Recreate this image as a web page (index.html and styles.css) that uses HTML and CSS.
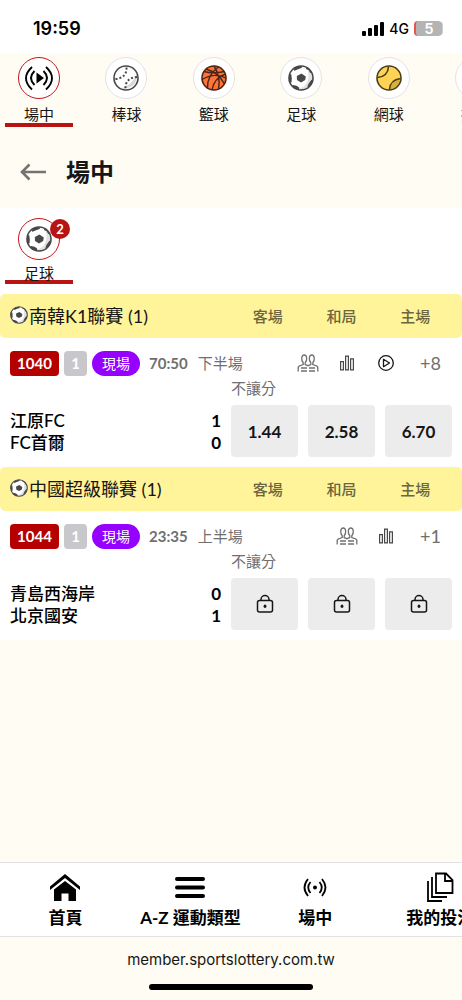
FILE: index.html
```html
<!DOCTYPE html>
<html lang="zh-Hant">

<head>
    <meta charset="UTF-8">
    <meta name="viewport" content="width=device-width, initial-scale=1.0">
    <title>場中</title>
    <link rel="stylesheet" href="styles.css">
</head>

<body>
    <!-- Shared icons -->
    <svg class="sprite" aria-hidden="true">
        <symbol id="icon-soccer" viewBox="0 0 26 26">
            <circle cx="13" cy="13" r="12" fill="#fff"/>
            <path d="M22 5.500A11.500 11.500 0 0 1 9 24C17 23 22 17 20 6z" fill="#e2e2e2"/>
            <path d="M13.500 8.500l4.300 3-.6 3.600-4.200 2.400-4-2.400-.2-4.200z" fill="#484848"/>
            <path d="M7.500 2l6-1 .5 1.800-4.600 1.600-2.800 1.300-1.200-1zM18.300 2l4.200 3.500 1.300 3-1.600-.8-1.600-2.500-2.600-1.200zM1 9.500l2.200-.5.6 4.300-.2 4-1.600.4L1 14zM5 20l3.500.8 2.700 1.800-.3 2.200-4.400-1.200-2.600-2.400zM24.900 14l-1.200 5-3.300 3.200-1-.6 1.300-3.200 2.400-3.200z" fill="#484848"/>
            <circle cx="13" cy="13" r="12" fill="none" stroke="#484848" stroke-width="1.600"/>
        </symbol>
        <symbol id="icon-people" viewBox="0 0 22 20">
            <g fill="none" stroke="#707070" stroke-width="1.300">
                <path d="M1.200 18.500v-4.200l1-1.300 4-1.500V9.800C4 7.500 4.200 2 7.200 2s3.200 5.500 1 7.800v1.700l2.800 1.200 2.800-1.200V9.800c-2.200-2.300-2-7.800 1-7.800s3.200 5.500 1 7.800v1.700l4 1.500 1 1.300v4.200"/>
                <path d="M4 15h6M4 18h6M12 15h6M12 18h6"/>
            </g>
        </symbol>
        <symbol id="icon-stats" viewBox="0 0 16 16">
            <path d="M1.600 6.600h2.800v8.300H1.600zM6.600 1.100h2.800v13.800H6.600zM11.600 3.900h2.800v11h-2.800z" fill="none" stroke="#484848" stroke-width="1.200"/>
        </symbol>
        <symbol id="icon-play" viewBox="0 0 18 18">
            <circle cx="9" cy="9" r="7.300" fill="none" stroke="#161616" stroke-width="1.300"/>
            <path d="M6.500 5.300v7.400L12.500 9z" fill="none" stroke="#161616" stroke-width="1.300" stroke-linejoin="round"/>
        </symbol>
        <symbol id="icon-lock" viewBox="0 0 18 20">
            <rect x="1.500" y="6.500" width="15" height="11.500" rx="2" fill="none" stroke="#161616" stroke-width="1.500"/>
            <path d="M5 6.500V5.500a4 4 0 0 1 8 0v1" fill="none" stroke="#161616" stroke-width="1.500"/>
            <ellipse cx="9" cy="12.200" rx="1.400" ry="1.800" fill="#161616"/>
        </symbol>
    </svg>

    <header class="status-bar">
        <span class="clock">19:59</span>
        <div class="status-icons">
            <svg width="22" height="14" viewBox="0 0 22 14" aria-hidden="true">
                <rect x="0" y="9" width="4" height="5" rx="1"/>
                <rect x="6" y="6" width="4" height="8" rx="1"/>
                <rect x="12" y="3" width="4" height="11" rx="1"/>
                <rect x="18" y="0" width="4" height="14" rx="1"/>
            </svg>
            <span class="network">4G</span>
            <span class="battery">5</span>
        </div>
    </header>

    <nav class="sports">
        <a href="#live" class="sport active">
            <span class="circle">
                <svg width="32" height="32" viewBox="0 0 32 32" aria-hidden="true">
                    <path d="M13.500 10.500v11l7.500-5.500z"/>
                    <path d="M11.500 9Q4.500 16 11.500 23M20.500 9Q27.500 16 20.500 23M9 5Q-3 16 9 27.500M23 5Q35 16 23 27.500" fill="none" stroke="#000" stroke-width="1.900"/>
                </svg>
            </span>
            場中
        </a>
        <a href="#baseball" class="sport">
            <span class="circle">
                <svg width="26" height="26" viewBox="0 0 26 26" aria-hidden="true">
                    <circle cx="13" cy="13" r="12" fill="#fff"/>
                    <path d="M24 8Q25 24 8 23.500 20 20 24 8z" fill="#d8d8d8"/>
                    <path d="M13.500 2.500Q14 13 2 14M24 12Q12 13 12.500 24" fill="none" stroke="#484848" stroke-width="2" stroke-dasharray="2 2"/>
                    <circle cx="13" cy="13" r="12" fill="none" stroke="#484848" stroke-width="1.600"/>
                </svg>
            </span>
            棒球
        </a>
        <a href="#basketball" class="sport">
            <span class="circle">
                <svg width="26" height="26" viewBox="0 0 26 26" aria-hidden="true">
                    <circle cx="13" cy="13" r="12" fill="#ff7438"/>
                    <path d="M3 6.500Q12 9 23.500 6.500M1 14.500Q14 7 25 13M13 1Q20 12 17.500 24M18 1.500Q6 10 6.500 23M24.500 9Q13 13 11 25M5 4Q18 8 23.500 19" fill="none" stroke="#4b2618" stroke-width="1.400"/>
                    <circle cx="13" cy="13" r="12" fill="none" stroke="#4b2618" stroke-width="1.600"/>
                </svg>
            </span>
            籃球
        </a>
        <a href="#soccer" class="sport">
            <span class="circle"><svg width="26" height="26" aria-hidden="true"><use href="#icon-soccer"/></svg></span>
            足球
        </a>
        <a href="#tennis" class="sport">
            <span class="circle">
                <svg width="26" height="26" viewBox="0 0 26 26" aria-hidden="true">
                    <circle cx="13" cy="13" r="12" fill="#ffd454"/>
                    <path d="M23.500 14Q15 16 14 24.500 23 23 23.500 14z" fill="#d9b03c"/>
                    <path d="M12.500 1.500Q12 11.500 1.500 12.500M24.500 13.500Q14 15 13.500 24.500" fill="none" stroke="#4a3f1a" stroke-width="1.600"/>
                    <circle cx="13" cy="13" r="12" fill="none" stroke="#4a3f1a" stroke-width="1.600"/>
                </svg>
            </span>
            網球
        </a>
        <a href="#volleyball" class="sport">
            <span class="circle"></span>
            排球
        </a>
    </nav>

    <div class="page-title">
        <button class="back" aria-label="返回">
            <svg width="26" height="18" viewBox="0 0 26 18" aria-hidden="true">
                <path d="M26 9H2M9.500 1.500L2 9l7.500 7.500" fill="none" stroke="#737370" stroke-width="2.600"/>
            </svg>
        </button>
        <h1>場中</h1>
    </div>

    <main>
        <nav class="sports live-sports">
            <a href="#live-soccer" class="sport active">
                <span class="circle">
                    <svg width="26" height="26" aria-hidden="true"><use href="#icon-soccer"/></svg>
                    <span class="count">2</span>
                </span>
                足球
            </a>
        </nav>

        <section class="league">
            <div class="league-header">
                <h2><svg width="18" height="18" aria-hidden="true"><use href="#icon-soccer"/></svg>南韓K1聯賽 (1)</h2>
                <div class="outcomes"><span>客場</span><span>和局</span><span>主場</span></div>
            </div>
            <div class="match">
                <div class="match-info">
                    <span class="code">1040</span>
                    <span class="single">1</span>
                    <span class="live">現場</span>
                    <span class="time">70:50</span>
                    <span class="period">下半場</span>
                    <div class="links">
                        <button aria-label="對戰"><svg width="22" height="20"><use href="#icon-people"/></svg></button>
                        <button aria-label="統計"><svg width="16" height="16"><use href="#icon-stats"/></svg></button>
                        <button aria-label="直播"><svg width="18" height="18"><use href="#icon-play"/></svg></button>
                        <a href="#match-1040" class="more">+8</a>
                    </div>
                </div>
                <div class="match-body">
                    <div class="teams">
                        <div class="team"><span>江原FC</span><b>1</b></div>
                        <div class="team"><span>FC首爾</span><b>0</b></div>
                    </div>
                    <div class="market">
                        <div class="market-name">不讓分</div>
                        <div class="odds">
                            <button>1.44</button>
                            <button>2.58</button>
                            <button>6.70</button>
                        </div>
                    </div>
                </div>
            </div>
        </section>

        <section class="league">
            <div class="league-header">
                <h2><svg width="18" height="18" aria-hidden="true"><use href="#icon-soccer"/></svg>中國超級聯賽 (1)</h2>
                <div class="outcomes"><span>客場</span><span>和局</span><span>主場</span></div>
            </div>
            <div class="match">
                <div class="match-info">
                    <span class="code">1044</span>
                    <span class="single">1</span>
                    <span class="live">現場</span>
                    <span class="time">23:35</span>
                    <span class="period">上半場</span>
                    <div class="links">
                        <button aria-label="對戰"><svg width="22" height="20"><use href="#icon-people"/></svg></button>
                        <button aria-label="統計"><svg width="16" height="16"><use href="#icon-stats"/></svg></button>
                        <a href="#match-1044" class="more">+1</a>
                    </div>
                </div>
                <div class="match-body">
                    <div class="teams">
                        <div class="team"><span>青島西海岸</span><b>0</b></div>
                        <div class="team"><span>北京國安</span><b>1</b></div>
                    </div>
                    <div class="market">
                        <div class="market-name">不讓分</div>
                        <div class="odds">
                            <button aria-label="客場"><svg width="18" height="20"><use href="#icon-lock"/></svg></button>
                            <button aria-label="和局"><svg width="18" height="20"><use href="#icon-lock"/></svg></button>
                            <button aria-label="主場"><svg width="18" height="20"><use href="#icon-lock"/></svg></button>
                        </div>
                    </div>
                </div>
            </div>
        </section>
    </main>

    <nav class="bottom-nav">
        <a href="#home">
            <svg width="30" height="30" viewBox="0 0 30 30" aria-hidden="true">
                <path d="M0 14.500L15 2l15 12.500v3.500L15 6 0 18z"/>
                <path d="M4 17.500L15 9l11 8.500V29h-7.500v-7.500h-7V29H4z"/>
            </svg>
            首頁
        </a>
        <a href="#sports">
            <svg width="30" height="30" viewBox="0 0 30 30" aria-hidden="true">
                <path d="M2 7h26M2 15.500h26M2 24h26" stroke="#000" stroke-width="4" stroke-linecap="round"/>
            </svg>
            A-Z 運動類型
        </a>
        <a href="#live">
            <svg width="30" height="30" viewBox="0 0 30 30" aria-hidden="true">
                <circle cx="15" cy="15.500" r="2"/>
                <path d="M10.500 10Q6 15.500 10.500 21M19.500 10Q24 15.500 19.500 21M8 7Q1 15.500 8 24M22 7Q29 15.500 22 24" fill="none" stroke="#000" stroke-width="1.800"/>
            </svg>
            場中
        </a>
        <a href="#bets">
            <svg width="30" height="30" viewBox="0 0 30 30" aria-hidden="true">
                <path d="M11 1.500h10l6.500 6.500v13H11zM20 1.500V9h7.500M7 5v20h15M3 9v20h14" fill="none" stroke="#000" stroke-width="1.800"/>
            </svg>
            我的投注
        </a>
    </nav>

    <footer class="browser-bar">
        <span>member.sportslottery.com.tw</span>
        <div class="home-indicator"></div>
    </footer>
</body>

</html>
```
FILE: styles.css
```css
/* Base Styles */
* {
    box-sizing: border-box;
}

body {
    margin: 0;
    min-height: 100vh;
    display: flex;
    flex-direction: column;
    overflow-x: hidden;
    background-color: #fffcf3;
    color: #161616;
    font-family: Lato, "Noto Sans CJK TC", sans-serif;
}

a {
    color: inherit;
    text-decoration: none;
}

button {
    padding: 0;
    border: none;
    background: none;
    color: inherit;
    font-family: inherit;
    cursor: pointer;
}

h1,
h2 {
    margin: 0;
}

svg {
    display: block;
    flex-shrink: 0;
}

.sprite {
    position: absolute;
    width: 0;
    height: 0;
}

/* Status bar */
.status-bar {
    height: 54px;
    padding: 3px 18px 0 33px;
    display: flex;
    align-items: center;
    justify-content: space-between;
    background-color: #fff;
    color: #000;
    font-family: Inter, sans-serif;
}

.clock {
    font-size: 18px;
    font-weight: 600;
}

.status-icons {
    display: flex;
    align-items: center;
    gap: 5px;
}

.network {
    font-size: 14px;
    font-weight: 500;
}

.battery {
    width: 28px;
    height: 15px;
    margin-right: 2px;
    border-left: 2px solid #f0504c;
    border-radius: 4px;
    background-color: #b4b4b4;
    box-shadow: 2px 0 0 -1px #cfcfcf;
    color: #fff;
    font-size: 14px;
    font-weight: 700;
    line-height: 15px;
    text-align: center;
}

/* Sports */
.sports {
    padding: 3px 5px 0;
    display: flex;
    gap: 4.3%;
    overflow-x: auto;
    scrollbar-width: none;
}

.sport {
    flex: 0 0 68px;
    height: 70px;
    display: flex;
    flex-direction: column;
    align-items: center;
    gap: 4px;
    border-bottom: 4px solid transparent;
    font-size: 15px;
    line-height: 22px;
    white-space: nowrap;
}

.sport.active {
    border-bottom-color: #b81414;
}

.circle {
    position: relative;
    width: 42px;
    height: 42px;
    flex-shrink: 0;
    display: flex;
    align-items: center;
    justify-content: center;
    border: 1px solid #e3e3e3;
    border-radius: 50%;
    background-color: #fff;
}

.active .circle {
    border-color: #c4161c;
}

.count {
    position: absolute;
    top: 0;
    right: -11px;
    width: 20px;
    height: 20px;
    border-radius: 50%;
    background-color: #b81414;
    color: #fff;
    font-size: 13px;
    font-weight: 700;
    line-height: 20px;
    text-align: center;
}

/* Page title */
.page-title {
    height: 81px;
    padding: 8px 20px 0;
    display: flex;
    align-items: center;
    gap: 20px;
}

.page-title h1 {
    font-size: 24px;
    font-weight: 700;
    line-height: 36px;
}

main {
    background-color: #fff;
    margin-bottom: auto;
}

.live-sports {
    padding: 10px 5px;
}

.live-sports .sport {
    height: 66px;
    gap: 2px;
}

/* Leagues */
.league-header {
    height: 44px;
    padding: 0 10px 2px;
    display: grid;
    grid-template-columns: 1fr 1fr;
    align-items: center;
    border-radius: 5px;
    background-color: #fff499;
}

.league-header h2 {
    display: flex;
    align-items: center;
    gap: 1px;
    font-size: 18px;
    font-weight: 400;
    white-space: nowrap;
}

.outcomes {
    display: grid;
    grid-template-columns: repeat(3, 1fr);
    color: #6b663f;
    font-size: 15px;
    font-weight: 500;
    text-align: center;
}

.match {
    padding: 12px 10px 10px;
}

.match-info {
    height: 26px;
    display: flex;
    align-items: center;
    gap: 5px;
    color: #6f6f6f;
    font-size: 15px;
    line-height: 20px;
    white-space: nowrap;
}

.code,
.single,
.live {
    height: 25px;
    line-height: 25px;
    border-radius: 4px;
    color: #fff;
    text-align: center;
}

.code {
    width: 49px;
    background-color: #b50000;
    font-weight: 700;
}

.single {
    width: 23px;
    background-color: #c8c7cc;
    font-weight: 700;
}

.live {
    width: 48px;
    border-radius: 13px;
    background-color: #9500ff;
    font-size: 14px;
}

.time {
    margin: 0 5px 0 4px;
    font-weight: 700;
}

.links {
    margin-left: auto;
    display: flex;
    align-items: center;
}

.links button {
    width: 39px;
    display: flex;
    justify-content: center;
}

.more {
    width: 47px;
    padding-right: 11px;
    font-size: 18px;
    text-align: right;
}

.match-body {
    display: grid;
    grid-template-columns: 1fr 1fr;
}

.teams {
    padding: 34px 10px 0 0;
}

.team {
    display: flex;
    justify-content: space-between;
    color: #000;
    font-size: 17px;
    font-weight: 500;
    line-height: 22px;
}

.market-name {
    height: 29px;
    color: #6f6f6f;
    font-size: 15px;
    line-height: 24px;
}

.odds {
    display: grid;
    grid-template-columns: repeat(3, 1fr);
    gap: 10px;
}

.odds button {
    height: 52px;
    display: flex;
    align-items: center;
    justify-content: center;
    border-radius: 4px;
    background-color: #ececec;
    font-size: 17px;
    font-weight: 700;
}

/* Bottom navigation */
.bottom-nav {
    height: 75px;
    padding: 9px 3px 0;
    display: flex;
    overflow-x: auto;
    scrollbar-width: none;
    border-top: 1px solid #e2e2e2;
    border-bottom: 1px solid #e2e2e2;
    background-color: #fff;
    color: #000;
    font-size: 17px;
    font-weight: 700;
    line-height: 28px;
}

.bottom-nav a {
    flex: 0 0 27.4%;
    display: flex;
    flex-direction: column;
    align-items: center;
    gap: 2px;
    white-space: nowrap;
}

/* Browser bar */
.browser-bar {
    height: 63px;
    padding: 12px 0 10px;
    display: flex;
    flex-direction: column;
    align-items: center;
    justify-content: space-between;
    font-family: Inter, sans-serif;
    font-size: 15px;
    line-height: 22px;
}

.home-indicator {
    width: 164px;
    height: 6px;
    border-radius: 3px;
    background-color: #000;
}
```
